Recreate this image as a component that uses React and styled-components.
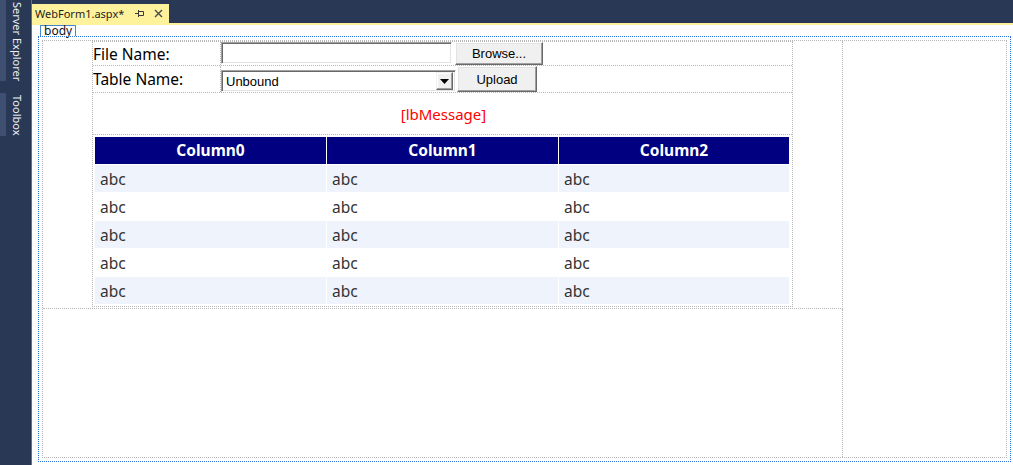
import React from 'react'
import styled, { createGlobalStyle } from 'styled-components'

const GlobalStyle = createGlobalStyle`
  html, body { margin: 0; padding: 0; background: #fff; }
  body { font-family: "Noto Sans", "DejaVu Sans", sans-serif; }
  * { box-sizing: border-box; }
`;

const Shell = styled.div`
  display: flex;
  width: 1013px;
  height: 465px;
  overflow: hidden;
`;

// left auto-hide tool window rail
const SideBar = styled.div`
  width: 32px;
  flex-shrink: 0;
  background: #293955;
  border-right: 1px solid #62708f;
  display: flex;
  flex-direction: column;
  gap: 12px;
`;

const SideTab = styled.div`
  display: flex;
  gap: 5px;
  flex-shrink: 0;
  height: ${({ h }) => h}px;
`;

const SideMark = styled.div`
  width: 6px;
  background: #3e4f71;
`;

const SideLabel = styled.span`
  writing-mode: vertical-rl;
  color: #eef0f4;
  font-size: 11px;
  line-height: 12px;
  padding-top: 2px;
  white-space: nowrap;
`;

const Main = styled.div`
  flex: 1;
  min-width: 0;
  display: flex;
  flex-direction: column;
`;

const TabStrip = styled.div`
  height: 25px;
  flex-shrink: 0;
  background: #293955;
  border-bottom: 2px solid #fff29d;
  display: flex;
  align-items: flex-end;
`;

const DocTab = styled.div`
  height: 19px;
  background: #fff29d;
  display: flex;
  align-items: center;
  padding: 0 6px 0 3px;
  font-size: 11px;
  color: #1e1e1e;
`;

const TabTitle = styled.span`
  margin-right: 11px;
  white-space: nowrap;
`;

const TabIcon = styled.svg`
  flex-shrink: 0;
  margin-right: ${({ gap }) => gap || 0}px;
`;

const Designer = styled.div`
  flex: 1;
  display: flex;
  flex-direction: column;
  padding: 0 2px 3px 6px;
  background: #fff;
`;

const BodyTag = styled.div`
  align-self: flex-start;
  margin-left: 2px;
  height: 11px;
  padding: 0 3px;
  border: 1px solid #4a86d0;
  border-bottom: none;
  font-size: 12px;
  line-height: 9px;
  color: #111;
  background: #fff;
`;

const BodyFrame = styled.div`
  flex: 1;
  display: flex;
  border: 1px dotted #2a72dc;
  padding: 3px;
`;

const LayoutGrid = styled.div`
  flex: 1;
  display: grid;
  grid-template-columns: 800px 1fr;
  grid-template-rows: 268px 1fr;
  border: 1px dotted #b8b8b8;
`;

const LayoutCell = styled.div`
  border-right: ${({ right }) => (right ? '1px dotted #b8b8b8' : 'none')};
  border-bottom: ${({ bottom }) => (bottom ? '1px dotted #b8b8b8' : 'none')};
  grid-row: ${({ span }) => (span ? '1 / span 2' : 'auto')};
  grid-column: ${({ col }) => col || 'auto'};
  padding-left: ${({ pad }) => pad || 0}px;
`;

const FormTable = styled.div`
  width: 701px;
  height: 266px;
  border: 1px dotted #b8b8b8;
  display: flex;
  flex-direction: column;
`;

const FormRow = styled.div`
  display: flex;
  height: ${({ h }) => h}px;
  flex-shrink: 0;
  border-bottom: ${({ last }) => (last ? 'none' : '1px dotted #b8b8b8')};
`;

const LabelCell = styled.div`
  width: 128px;
  border-right: 1px dotted #b8b8b8;
  display: flex;
  align-items: center;
  font-size: 15.5px;
  color: #000;
  white-space: nowrap;
`;

const ControlCell = styled.div`
  flex: 1;
  display: flex;
  align-items: ${({ end }) => (end ? 'flex-end' : 'flex-start')};
  gap: ${({ gap }) => gap}px;
`;

const TextBox = styled.div`
  width: 231px;
  height: 22px;
  background: #fff;
  border: 1px solid;
  border-color: #a0a0a0 #fff #fff #a0a0a0;
  box-shadow: inset 1px 1px #696969, inset -1px -1px #e3e3e3;
`;

const Button = styled.button`
  width: ${({ w }) => w}px;
  height: ${({ h }) => h}px;
  padding: 0;
  background: #f0f0f0;
  border: 1px solid;
  border-color: #fff #696969 #696969 #fff;
  box-shadow: inset -1px -1px #a0a0a0, inset 1px 1px #e3e3e3;
  font-family: "Liberation Sans", Arial, sans-serif;
  font-size: 13px;
  color: #000;
`;

const SelectBox = styled.div`
  width: 235px;
  height: 22px;
  display: flex;
  align-items: center;
  background: #fff;
  border: 1px solid;
  border-color: #a0a0a0 #fff #fff #a0a0a0;
  box-shadow: inset 1px 1px #696969, inset -1px -1px #e3e3e3;
  padding: 2px 2px 2px 0;
`;

const SelectValue = styled.span`
  flex: 1;
  padding-left: 4px;
  font-family: "Liberation Sans", Arial, sans-serif;
  font-size: 13px;
  color: #000;
`;

const ArrowButton = styled.div`
  width: 17px;
  height: 18px;
  display: flex;
  align-items: center;
  justify-content: center;
  background: #f0f0f0;
  border: 1px solid;
  border-color: #f0f0f0 #696969 #696969 #f0f0f0;
  box-shadow: inset -1px -1px #a0a0a0, inset 1px 1px #fff;
`;

const MessageCell = styled.div`
  flex: 1;
  display: flex;
  align-items: center;
  justify-content: center;
  font-size: 15px;
  color: #ff0000;
  padding-left: 2px;
`;

const GridCell = styled.div`
  flex: 1;
  padding: 2px 2px 0 2px;
`;

const DataGrid = styled.div`
  display: grid;
  grid-template-columns: 231px 231px 230px;
  grid-auto-rows: 27px;
  gap: 1px;
  background: #fff;
`;

const HeadCell = styled.div`
  background: #000080;
  color: #fff;
  font-weight: 700;
  font-size: 15.5px;
  line-height: 27px;
  text-align: center;
`;

const DataCell = styled.div`
  background: ${({ alt }) => (alt ? '#eff3fb' : '#fff')};
  color: #333;
  font-size: 15.5px;
  line-height: 25px;
  padding: 2px 0 0 5px;
`;

const columns = ['Column0', 'Column1', 'Column2'];
const rows = [0, 1, 2, 3, 4];

const App = () => {
  return (
    <Shell>
      <GlobalStyle />
      <SideBar>
        <SideTab h={81}>
          <SideMark />
          <SideLabel>Server Explorer</SideLabel>
        </SideTab>
        <SideTab h={43}>
          <SideMark />
          <SideLabel>Toolbox</SideLabel>
        </SideTab>
      </SideBar>
      <Main>
        <TabStrip>
          <DocTab>
            <TabTitle>WebForm1.aspx*</TabTitle>
            <TabIcon width="10" height="9" viewBox="0 0 10 9" gap={9}>
              <path d="M0 4.5H3.5M3.5 1V8M3.5 2.5H8.5V6.5H3.5" fill="none" stroke="#3a3a3a" strokeWidth="1" />
            </TabIcon>
            <TabIcon width="9" height="9" viewBox="0 0 9 9">
              <path d="M1 1L8 8M8 1L1 8" fill="none" stroke="#4a4a4a" strokeWidth="1.4" />
            </TabIcon>
          </DocTab>
        </TabStrip>
        <Designer>
          <BodyTag>body</BodyTag>
          <BodyFrame>
            <LayoutGrid>
              <LayoutCell right bottom pad={49}>
                <FormTable>
                  <FormRow h={24}>
                    <LabelCell>File Name:</LabelCell>
                    <ControlCell gap={3}>
                      <TextBox />
                      <Button w={88} h={23}>Browse...</Button>
                    </ControlCell>
                  </FormRow>
                  <FormRow h={27}>
                    <LabelCell>Table Name:</LabelCell>
                    <ControlCell gap={1} end>
                      <SelectBox>
                        <SelectValue>Unbound</SelectValue>
                        <ArrowButton>
                          <svg width="9" height="5" viewBox="0 0 9 5">
                            <path d="M0 0H9L4.5 5Z" fill="#000" />
                          </svg>
                        </ArrowButton>
                      </SelectBox>
                      <Button w={80} h={26}>Upload</Button>
                    </ControlCell>
                  </FormRow>
                  <FormRow h={42}>
                    <MessageCell>[lbMessage]</MessageCell>
                  </FormRow>
                  <FormRow h={171} last>
                    <GridCell>
                      <DataGrid>
                        {columns.map((c) => (
                          <HeadCell key={c}>{c}</HeadCell>
                        ))}
                        {rows.map((r) =>
                          columns.map((c) => (
                            <DataCell key={c + r} alt={r % 2 === 0}>abc</DataCell>
                          ))
                        )}
                      </DataGrid>
                    </GridCell>
                  </FormRow>
                </FormTable>
              </LayoutCell>
              <LayoutCell col={2} span />
              <LayoutCell right />
            </LayoutGrid>
          </BodyFrame>
        </Designer>
      </Main>
    </Shell>
  );
};

export default App
